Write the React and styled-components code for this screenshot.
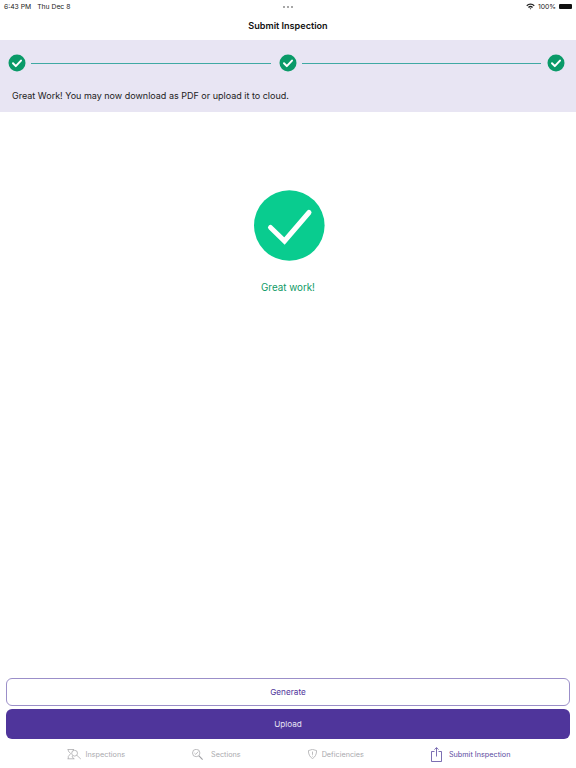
import styled, { createGlobalStyle } from "styled-components";

const GlobalStyle = createGlobalStyle`
  html, body {
    margin: 0;
    padding: 0;
    background: #fff;
  }
  body {
    font-family: Inter, "Liberation Sans", sans-serif;
  }
`;

const Page = styled.div`
  width: 576px;
  height: 768px;
  display: flex;
  flex-direction: column;
  overflow: hidden;
`;

const StatusBar = styled.div`
  height: 12px;
  padding: 0 4px;
  display: flex;
  align-items: center;
  justify-content: space-between;
  font-size: 6.8px;
  color: #222;
`;
const StatusGroup = styled.div`
  display: flex;
  align-items: center;
  gap: ${(props) => props.$gap || 3}px;
  flex: 1;
  justify-content: ${(props) => props.$align || "flex-start"};
`;
const Dots = styled.div`
  display: flex;
  gap: 2px;
  margin-top: 2px;
`;
const Dot = styled.span`
  width: 2px;
  height: 2px;
  border-radius: 50%;
  background: #8a8a8a;
`;
const Battery = styled.span`
  width: 13px;
  height: 5px;
  border-radius: 1px;
  background: #111;
`;

const NavTitle = styled.div`
  height: 28px;
  padding-bottom: 2px;
  box-sizing: border-box;
  display: flex;
  align-items: center;
  justify-content: center;
  font-size: 9.1px;
  font-weight: 600;
  color: #111;
`;

const Banner = styled.div`
  height: 72px;
  background: #e8e5f3;
  display: flex;
  flex-direction: column;
`;
const Stepper = styled.div`
  display: flex;
  align-items: center;
  padding: 14px 11px 0 8px;
`;
const Line = styled.div`
  flex: 1;
  height: 1px;
  background: #3fa9a3;
  margin: 0 ${(props) => props.$right}px 0 5px;
`;
const Message = styled.div`
  margin-top: 18px;
  padding-left: 12px;
  font-size: 9px;
  line-height: 12px;
  color: #222;
`;

const Main = styled.div`
  flex: 1;
  display: flex;
  flex-direction: column;
  align-items: center;
  padding-top: 78px;
`;
const BigCheck = styled.div`
  width: 71px;
  height: 71px;
  margin-left: 2px;
`;
const Success = styled.div`
  margin-top: 21px;
  font-size: 9.8px;
  color: #0f9a66;
`;

const Actions = styled.div`
  display: flex;
  flex-direction: column;
  gap: 3px;
  padding: 0 6px;
`;
const Button = styled.button`
  height: ${(props) => (props.$primary ? 30 : 28)}px;
  border-radius: 6px;
  border: ${(props) => (props.$primary ? "none" : "1px solid #9b8fc9")};
  background: ${(props) => (props.$primary ? "#4f359b" : "#fff")};
  color: ${(props) => (props.$primary ? "#e6e1f5" : "#4f359b")};
  font-family: inherit;
  font-size: 8.2px;
  padding: 0;
`;

const TabBar = styled.div`
  height: 29px;
  padding: 1px 0 0 1px;
  box-sizing: border-box;
  display: flex;
  justify-content: center;
  gap: 67px;
`;
const Tab = styled.div`
  display: flex;
  align-items: center;
  gap: ${(props) => props.$gap}px;
  font-size: 7.25px;
  color: ${(props) => (props.$active ? "#5a4aa0" : "#a9a9ad")};
`;

const SmallCheck = () => (
  <svg width="18" height="18" viewBox="0 0 18 18">
    <circle cx="9" cy="9" r="8.5" fill="#0a9a68" />
    <path d="M5 9.3l2.8 2.8L13 6.6" fill="none" stroke="#fff" strokeWidth="2" strokeLinecap="round" strokeLinejoin="round" />
  </svg>
);

const Wifi = () => (
  <svg width="9" height="7" viewBox="0 0 9 7">
    <path d="M0.3 2.3a6 6 0 0 1 8.4 0L7.8 3.2a4.7 4.7 0 0 0-6.6 0zM2 4a3.6 3.6 0 0 1 5 0L6.1 4.9a2.3 2.3 0 0 0-3.2 0zM3.6 5.6a1.3 1.3 0 0 1 1.8 0L4.5 6.6z" fill="#222" />
  </svg>
);

const App = () => {
  return (
    <Page>
      <GlobalStyle />
      <StatusBar>
        <StatusGroup $gap={6}>
          <span>6:43 PM</span>
          <span>Thu Dec 8</span>
        </StatusGroup>
        <Dots>
          <Dot />
          <Dot />
          <Dot />
        </Dots>
        <StatusGroup $align="flex-end">
          <Wifi />
          <span>100%</span>
          <Battery />
        </StatusGroup>
      </StatusBar>
      <NavTitle>Submit Inspection</NavTitle>
      <Banner>
        <Stepper>
          <SmallCheck />
          <Line $right={8} />
          <SmallCheck />
          <Line $right={6} />
          <SmallCheck />
        </Stepper>
        <Message>Great Work! You may now download as PDF or upload it to cloud.</Message>
      </Banner>
      <Main>
        <BigCheck>
          <svg width="71" height="71" viewBox="0 0 71 71">
            <circle cx="35.3" cy="35.5" r="35.3" fill="#09cc8f" />
            <path d="M16.5 37.5L30.5 51L55 22.5" fill="none" stroke="#fff" strokeWidth="5" strokeLinecap="round" />
          </svg>
        </BigCheck>
        <Success>Great work!</Success>
      </Main>
      <Actions>
        <Button>Generate</Button>
        <Button $primary>Upload</Button>
      </Actions>
      <TabBar>
        <Tab $gap={5}>
          <svg width="14" height="11" viewBox="0 0 14 11" fill="none" stroke="#a0a0a4" strokeWidth="0.7">
            <path d="M.5 .5h6.5M.5 9.8h7M1.3 .5v1.5l2.3 2.6L1.3 7.5v2.3M6.3 .5v1M5 7l1.5 2.8" />
            <circle cx="7.6" cy="4.2" r="2.9" />
            <path d="M9.8 6.3L13.8 10" />
          </svg>
          <span>Inspections</span>
        </Tab>
        <Tab $gap={8}>
          <svg width="11" height="11" viewBox="0 0 11 11" fill="none" stroke="#a0a0a4" strokeWidth="0.7">
            <circle cx="4.2" cy="4" r="3.7" />
            <path d="M2.4 4l1.4 1.4L6.2 2.6" />
            <path d="M7 6.8L10.6 10.6" strokeWidth="1.1" />
          </svg>
          <span>Sections</span>
        </Tab>
        <Tab $gap={5}>
          <svg width="9" height="10" viewBox="0 0 9 10" fill="none" stroke="#a0a0a4" strokeWidth="0.7">
            <path d="M4.5 .4L8.6 1.6c0 3.6-1.4 6.4-4.1 8C1.8 8 .4 5.2 .4 1.6z" />
            <path d="M4.5 2.6v3.2M4.5 6.8v.7" />
          </svg>
          <span>Deficiencies</span>
        </Tab>
        <Tab $active $gap={7}>
          <svg width="11" height="15" viewBox="0 0 11 15" fill="none" stroke="#5a4aa0" strokeWidth="0.8">
            <path d="M3.5 4.5H.5v10h10v-10h-3" />
            <path d="M5.5 9.5V.8M3.5 2.6L5.5.6l2 2" />
          </svg>
          <span>Submit Inspection</span>
        </Tab>
      </TabBar>
    </Page>
  );
};

export default App;
